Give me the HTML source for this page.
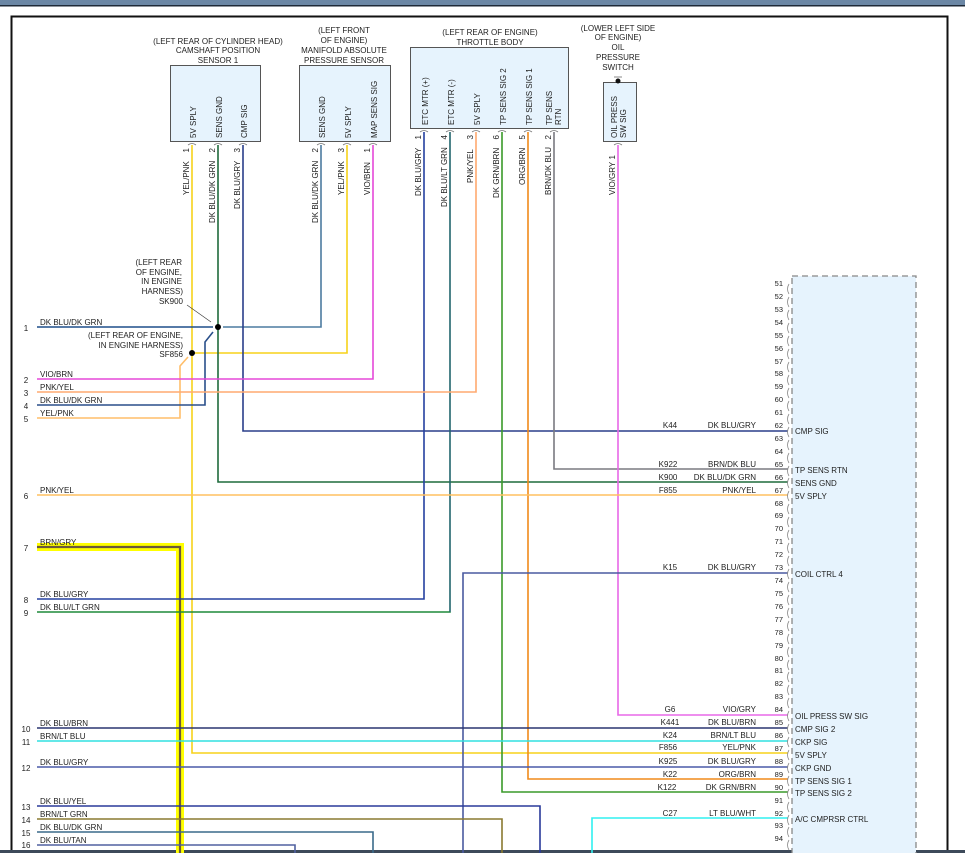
<!DOCTYPE html>
<html><head><meta charset="utf-8"><style>
html,body{margin:0;padding:0;background:#fff;}
svg{display:block;font-family:"Liberation Sans",sans-serif;}
text{fill:#222;}
</style></head><body>
<svg width="965" height="853" viewBox="0 0 965 853" xmlns="http://www.w3.org/2000/svg">
<rect x="0" y="0" width="965" height="6" fill="#6b87a5"/>
<rect x="0" y="5" width="965" height="1.5" fill="#1e2a38"/>
<rect x="11.5" y="16.5" width="936" height="850" fill="none" stroke="#111" stroke-width="2"/>
<rect x="0" y="850" width="965" height="3" fill="#3d4a5a"/>

<!-- boxes -->
<g fill="#e6f3fd" stroke="#555" stroke-width="1">
<rect x="170.5" y="65.5" width="90" height="76"/>
<rect x="299.5" y="65.5" width="91" height="76"/>
<rect x="410.5" y="47.5" width="158" height="81"/>
<rect x="603.5" y="82.5" width="33" height="59"/>
</g>
<rect x="792" y="276" width="124" height="580" fill="#e6f3fd" stroke="#888" stroke-width="1.3" stroke-dasharray="6,4"/>

<g font-size="8" text-anchor="middle">
<text x="218" y="44">(LEFT REAR OF CYLINDER HEAD)</text>
<text x="218" y="53">CAMSHAFT POSITION</text>
<text x="218" y="63">SENSOR 1</text>
<text x="344" y="33">(LEFT FRONT</text>
<text x="344" y="43">OF ENGINE)</text>
<text x="344" y="53">MANIFOLD ABSOLUTE</text>
<text x="344" y="63">PRESSURE SENSOR</text>
<text x="490" y="35">(LEFT REAR OF ENGINE)</text>
<text x="490" y="45">THROTTLE BODY</text>
<text x="618" y="31">(LOWER LEFT SIDE</text>
<text x="618" y="40">OF ENGINE)</text>
<text x="618" y="50">OIL</text>
<text x="618" y="60">PRESSURE</text>
<text x="618" y="70">SWITCH</text>
</g>
<circle cx="618" cy="81" r="2.5" fill="#111"/>
<line x1="614" y1="77" x2="622" y2="77" stroke="#555" stroke-width="0.7"/>

<!-- box inner labels (rotated) -->
<g font-size="8">
<text transform="translate(196,138) rotate(-90)">5V SPLY</text>
<text transform="translate(222,138) rotate(-90)">SENS GND</text>
<text transform="translate(247,138) rotate(-90)">CMP SIG</text>
<text transform="translate(325,138) rotate(-90)">SENS GND</text>
<text transform="translate(351,138) rotate(-90)">5V SPLY</text>
<text transform="translate(377,138) rotate(-90)">MAP SENS SIG</text>
<text transform="translate(428,125) rotate(-90)">ETC MTR (+)</text>
<text transform="translate(454,125) rotate(-90)">ETC MTR (-)</text>
<text transform="translate(480,125) rotate(-90)">5V SPLY</text>
<text transform="translate(506,125) rotate(-90)">TP SENS SIG 2</text>
<text transform="translate(532,125) rotate(-90)">TP SENS SIG 1</text>
<text transform="translate(552,125) rotate(-90)">TP SENS</text>
<text transform="translate(561,125) rotate(-90)">RTN</text>
<text transform="translate(617,138) rotate(-90)">OIL PRESS</text>
<text transform="translate(626,138) rotate(-90)">SW SIG</text>
</g>

<!-- pin numbers and wire labels under boxes -->
<g font-size="8" text-anchor="end">
<text transform="translate(189,148) rotate(-90)">1</text><text transform="translate(189,195) rotate(-90)" text-anchor="start">YEL/PNK</text>
<text transform="translate(215,148) rotate(-90)">2</text><text transform="translate(215,223) rotate(-90)" text-anchor="start">DK BLU/DK GRN</text>
<text transform="translate(240,148) rotate(-90)">3</text><text transform="translate(240,209) rotate(-90)" text-anchor="start">DK BLU/GRY</text>
<text transform="translate(318,148) rotate(-90)">2</text><text transform="translate(318,223) rotate(-90)" text-anchor="start">DK BLU/DK GRN</text>
<text transform="translate(344,148) rotate(-90)">3</text><text transform="translate(344,195) rotate(-90)" text-anchor="start">YEL/PNK</text>
<text transform="translate(370,148) rotate(-90)">1</text><text transform="translate(370,195) rotate(-90)" text-anchor="start">VIO/BRN</text>
<text transform="translate(421,135) rotate(-90)">1</text><text transform="translate(421,196) rotate(-90)" text-anchor="start">DK BLU/GRY</text>
<text transform="translate(447,135) rotate(-90)">4</text><text transform="translate(447,207) rotate(-90)" text-anchor="start">DK BLU/LT GRN</text>
<text transform="translate(473,135) rotate(-90)">3</text><text transform="translate(473,183) rotate(-90)" text-anchor="start">PNK/YEL</text>
<text transform="translate(499,135) rotate(-90)">6</text><text transform="translate(499,198) rotate(-90)" text-anchor="start">DK GRN/BRN</text>
<text transform="translate(525,135) rotate(-90)">5</text><text transform="translate(525,185) rotate(-90)" text-anchor="start">ORG/BRN</text>
<text transform="translate(551,135) rotate(-90)">2</text><text transform="translate(551,195) rotate(-90)" text-anchor="start">BRN/DK BLU</text>
<text transform="translate(615,155) rotate(-90)">1</text><text transform="translate(615,195) rotate(-90)" text-anchor="start">VIO/GRY</text>
</g>

<!-- connector brackets at box bottoms -->
<g fill="none" stroke="#777" stroke-width="0.8">
<path d="M188 145 q4 -3 8 0 M214 145 q4 -3 8 0 M239 145 q4 -3 8 0 M317 145 q4 -3 8 0 M343 145 q4 -3 8 0 M369 145 q4 -3 8 0"/>
<path d="M420 132 q4 -3 8 0 M446 132 q4 -3 8 0 M472 132 q4 -3 8 0 M498 132 q4 -3 8 0 M524 132 q4 -3 8 0 M550 132 q4 -3 8 0 M614 145 q4 -3 8 0"/>
</g>

<!-- wires -->
<g fill="none" stroke-width="1.6" stroke-linejoin="miter">
<!-- BRN/GRY highlighted -->
<path d="M37 547 H180 V853" stroke="#ffff00" stroke-width="8"/>
<path d="M37 547 H180 V853" stroke="#6b5a3a" stroke-width="2.2"/>
<!-- yellow 5V cam -->
<path d="M192 145 V753 H788" stroke="#f7d21a"/>
<path d="M192 353 H347 V145" stroke="#f7d21a"/>
<path d="M37 418 H180 V366 L188 357" stroke="#ffbe6a"/>
<!-- sens gnd -->
<path d="M218 145 V482 H788" stroke="#1f6b3c"/>
<path d="M37 327 H213" stroke="#1f4f8a"/>
<path d="M223 327 H321 V145" stroke="#4c7ba0"/>
<path d="M37 405 H205 V342 L213 332" stroke="#2a4f8a"/>
<!-- cmp sig -->
<path d="M243 145 V431 H788" stroke="#2a3e8a"/>
<!-- map sig -->
<path d="M373 145 V379 H37" stroke="#e548d8"/>
<!-- throttle body -->
<path d="M424 132 V599 H37" stroke="#2540a0"/>
<path d="M450 132 V612 H37" stroke="#1e8a3a"/>
<path d="M450 132 V612" stroke="#2540a0" stroke-width="0.8"/>
<path d="M476 132 V392 H37" stroke="#ffaa70"/>
<path d="M502 132 V792 H788" stroke="#3a9a2a"/>
<path d="M528 132 V779 H788" stroke="#f08a1a"/>
<path d="M554 132 V469 H788" stroke="#7a7a80"/>
<path d="M618 145 V715 H788" stroke="#e868e8"/>
<!-- others -->
<path d="M37 495 H788" stroke="#ffc060"/>
<path d="M463 853 V573 H788" stroke="#4a5aa0"/>
<path d="M37 728 H788" stroke="#2a3570"/>
<path d="M37 741 H788" stroke="#30e0e0"/>
<path d="M37 767 H788" stroke="#4a5aa8"/>
<path d="M37 806 H540 V853" stroke="#2a3a9a"/>
<path d="M37 819 H502 V853" stroke="#8a7a30"/>
<path d="M37 832 H373 V853" stroke="#3a6a8a"/>
<path d="M37 845 H295 V853" stroke="#5060a0"/>
<path d="M788 818 H592 V853" stroke="#30f0f0"/>
</g>
<circle cx="218" cy="327" r="3" fill="#000"/>
<circle cx="192" cy="353" r="3" fill="#000"/>
<line x1="187" y1="305" x2="211" y2="322" stroke="#333" stroke-width="0.6"/>

<g font-size="8" text-anchor="end">
<text x="182" y="265">(LEFT REAR</text>
<text x="182" y="275">OF ENGINE,</text>
<text x="182" y="284">IN ENGINE</text>
<text x="183" y="294">HARNESS)</text>
<text x="183" y="304">SK900</text>
<text x="183" y="338">(LEFT REAR OF ENGINE,</text>
<text x="183" y="348">IN ENGINE HARNESS)</text>
<text x="183" y="357">SF856</text>
</g>

<!-- left pins -->
<g font-size="8">
<g text-anchor="middle">
<text x="26" y="331">1</text><text x="26" y="383">2</text><text x="26" y="396">3</text><text x="26" y="409">4</text><text x="26" y="422">5</text>
<text x="26" y="499">6</text><text x="26" y="551">7</text><text x="26" y="603">8</text><text x="26" y="616">9</text>
<text x="26" y="732">10</text><text x="26" y="745">11</text><text x="26" y="771">12</text><text x="26" y="810">13</text>
<text x="26" y="823">14</text><text x="26" y="836">15</text><text x="26" y="848">16</text>
</g>
<text x="40" y="325">DK BLU/DK GRN</text>
<text x="40" y="377">VIO/BRN</text>
<text x="40" y="390">PNK/YEL</text>
<text x="40" y="403">DK BLU/DK GRN</text>
<text x="40" y="416">YEL/PNK</text>
<text x="40" y="493">PNK/YEL</text>
<text x="40" y="545">BRN/GRY</text>
<text x="40" y="597">DK BLU/GRY</text>
<text x="40" y="610">DK BLU/LT GRN</text>
<text x="40" y="726">DK BLU/BRN</text>
<text x="40" y="739">BRN/LT BLU</text>
<text x="40" y="765">DK BLU/GRY</text>
<text x="40" y="804">DK BLU/YEL</text>
<text x="40" y="817">BRN/LT GRN</text>
<text x="40" y="830">DK BLU/DK GRN</text>
<text x="40" y="843">DK BLU/TAN</text>
</g>

<!-- right connector numbers -->
<g font-size="7.5" text-anchor="end">
<text x="783" y="286">51</text><text x="783" y="299">52</text><text x="783" y="312">53</text><text x="783" y="325">54</text>
<text x="783" y="338">55</text><text x="783" y="351">56</text><text x="783" y="364">57</text><text x="783" y="376">58</text>
<text x="783" y="389">59</text><text x="783" y="402">60</text><text x="783" y="415">61</text><text x="783" y="428">62</text>
<text x="783" y="441">63</text><text x="783" y="454">64</text><text x="783" y="467">65</text><text x="783" y="480">66</text>
<text x="783" y="493">67</text><text x="783" y="506">68</text><text x="783" y="518">69</text><text x="783" y="531">70</text>
<text x="783" y="544">71</text><text x="783" y="557">72</text><text x="783" y="570">73</text><text x="783" y="583">74</text>
<text x="783" y="596">75</text><text x="783" y="609">76</text><text x="783" y="622">77</text><text x="783" y="635">78</text>
<text x="783" y="648">79</text><text x="783" y="661">80</text><text x="783" y="673">81</text><text x="783" y="686">82</text>
<text x="783" y="699">83</text><text x="783" y="712">84</text><text x="783" y="725">85</text><text x="783" y="738">86</text>
<text x="783" y="751">87</text><text x="783" y="764">88</text><text x="783" y="777">89</text><text x="783" y="790">90</text>
<text x="783" y="803">91</text><text x="783" y="816">92</text><text x="783" y="828">93</text><text x="783" y="841">94</text>
</g>
<g fill="none" stroke="#888" stroke-width="0.8">
<path d="M789 284 q-3 5 0 10 M789 297 q-3 5 0 10 M789 310 q-3 5 0 10 M789 323 q-3 5 0 10 M789 336 q-3 5 0 10 M789 349 q-3 5 0 10 M789 362 q-3 5 0 10 M789 375 q-3 5 0 10 M789 388 q-3 5 0 10 M789 401 q-3 5 0 10 M789 414 q-3 5 0 10 M789 427 q-3 5 0 10 M789 440 q-3 5 0 10 M789 453 q-3 5 0 10 M789 466 q-3 5 0 10 M789 478 q-3 5 0 10 M789 491 q-3 5 0 10 M789 504 q-3 5 0 10 M789 517 q-3 5 0 10 M789 530 q-3 5 0 10 M789 543 q-3 5 0 10 M789 556 q-3 5 0 10 M789 569 q-3 5 0 10 M789 582 q-3 5 0 10 M789 595 q-3 5 0 10 M789 608 q-3 5 0 10 M789 621 q-3 5 0 10 M789 634 q-3 5 0 10 M789 647 q-3 5 0 10 M789 660 q-3 5 0 10 M789 672 q-3 5 0 10 M789 685 q-3 5 0 10 M789 698 q-3 5 0 10 M789 711 q-3 5 0 10 M789 724 q-3 5 0 10 M789 737 q-3 5 0 10 M789 750 q-3 5 0 10 M789 763 q-3 5 0 10 M789 776 q-3 5 0 10 M789 789 q-3 5 0 10 M789 802 q-3 5 0 10 M789 815 q-3 5 0 10 M789 827 q-3 5 0 10 M789 840 q-3 5 0 10"/>
</g>

<!-- right circuit labels -->
<g font-size="8">
<g text-anchor="middle">
<text x="670" y="428">K44</text><text x="668" y="467">K922</text><text x="668" y="480">K900</text><text x="668" y="493">F855</text>
<text x="670" y="570">K15</text><text x="670" y="712">G6</text><text x="670" y="725">K441</text><text x="670" y="738">K24</text>
<text x="668" y="750">F856</text><text x="668" y="764">K925</text><text x="670" y="777">K22</text><text x="667" y="790">K122</text>
<text x="670" y="816">C27</text>
</g>
<g text-anchor="end">
<text x="756" y="428">DK BLU/GRY</text><text x="756" y="467">BRN/DK BLU</text><text x="756" y="480">DK BLU/DK GRN</text><text x="756" y="493">PNK/YEL</text>
<text x="756" y="570">DK BLU/GRY</text><text x="756" y="712">VIO/GRY</text><text x="756" y="725">DK BLU/BRN</text><text x="756" y="738">BRN/LT BLU</text>
<text x="756" y="750">YEL/PNK</text><text x="756" y="764">DK BLU/GRY</text><text x="756" y="777">ORG/BRN</text><text x="756" y="790">DK GRN/BRN</text>
<text x="756" y="816">LT BLU/WHT</text>
</g>
<text x="795" y="434">CMP SIG</text>
<text x="795" y="473">TP SENS RTN</text>
<text x="795" y="486">SENS GND</text>
<text x="795" y="499">5V SPLY</text>
<text x="795" y="577">COIL CTRL 4</text>
<text x="795" y="719">OIL PRESS SW SIG</text>
<text x="795" y="732">CMP SIG 2</text>
<text x="795" y="745">CKP SIG</text>
<text x="795" y="758">5V SPLY</text>
<text x="795" y="771">CKP GND</text>
<text x="795" y="784">TP SENS SIG 1</text>
<text x="795" y="796">TP SENS SIG 2</text>
<text x="795" y="822">A/C CMPRSR CTRL</text>
</g>
</svg>
</body></html>
